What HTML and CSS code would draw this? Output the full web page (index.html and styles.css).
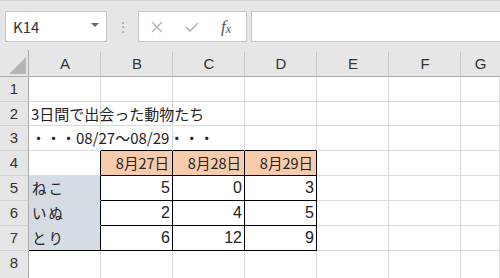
FILE: index.html
```html
<!DOCTYPE html>
<html lang="ja">
<head>
  <meta charset="UTF-8">
  <meta name="viewport" content="width=device-width, initial-scale=1.0">
  <title>Book1 - Excel</title>
  <link rel="stylesheet" href="styles.css">
</head>
<body>
  <div class="toolbar">
    <div class="namebox">
      <span>K14</span>
      <span class="arrow"></span>
    </div>
    <div class="grip">&#8942;</div>
    <div class="buttons">
      <svg class="btn" width="14" height="14" viewBox="0 0 14 14"><path d="M2 2 L12 12 M12 2 L2 12" stroke="#b4b4b4" stroke-width="1.4" fill="none"/></svg>
      <svg class="btn" width="16" height="14" viewBox="0 0 16 14"><path d="M2 7 L6 11 L14 3" stroke="#b4b4b4" stroke-width="1.6" fill="none"/></svg>
      <span class="fx">f<sub>x</sub></span>
    </div>
    <div class="formula"></div>
  </div>

  <div class="sheet">
    <!-- column headers -->
    <div class="corner"><span class="tri"></span></div>
    <div class="colhead">A</div>
    <div class="colhead">B</div>
    <div class="colhead">C</div>
    <div class="colhead">D</div>
    <div class="colhead">E</div>
    <div class="colhead">F</div>
    <div class="colhead last">G</div>

    <!-- row 1 -->
    <div class="rowhead">1</div>
    <div class="cell"></div><div class="cell"></div><div class="cell"></div><div class="cell"></div><div class="cell"></div><div class="cell"></div><div class="cell"></div>

    <!-- row 2 -->
    <div class="rowhead">2</div>
    <div class="cell text">3日間で出会った動物たち</div><div class="cell"></div><div class="cell"></div><div class="cell"></div><div class="cell"></div><div class="cell"></div><div class="cell"></div>

    <!-- row 3 -->
    <div class="rowhead">3</div>
    <div class="cell text">・・・08/27～08/29・・・</div><div class="cell bb"></div><div class="cell bb"></div><div class="cell bb"></div><div class="cell"></div><div class="cell"></div><div class="cell"></div>

    <!-- row 4 -->
    <div class="rowhead">4</div>
    <div class="cell br"></div>
    <div class="cell date bb br">8月27日</div>
    <div class="cell date bb br">8月28日</div>
    <div class="cell date bb br">8月29日</div>
    <div class="cell"></div><div class="cell"></div><div class="cell"></div>

    <!-- row 5 -->
    <div class="rowhead">5</div>
    <div class="cell label br">ねこ</div>
    <div class="cell num bb br">5</div>
    <div class="cell num bb br">0</div>
    <div class="cell num bb br">3</div>
    <div class="cell"></div><div class="cell"></div><div class="cell"></div>

    <!-- row 6 -->
    <div class="rowhead">6</div>
    <div class="cell label br">いぬ</div>
    <div class="cell num bb br">2</div>
    <div class="cell num bb br">4</div>
    <div class="cell num bb br">5</div>
    <div class="cell"></div><div class="cell"></div><div class="cell"></div>

    <!-- row 7 -->
    <div class="rowhead">7</div>
    <div class="cell label bb br">とり</div>
    <div class="cell num bb br">6</div>
    <div class="cell num bb br">12</div>
    <div class="cell num bb br">9</div>
    <div class="cell"></div><div class="cell"></div><div class="cell"></div>

    <!-- row 8 -->
    <div class="rowhead">8</div>
    <div class="cell"></div><div class="cell"></div><div class="cell"></div><div class="cell"></div><div class="cell"></div><div class="cell"></div><div class="cell"></div>
  </div>
</body>
</html>
```

FILE: styles.css
```css
body {
  margin: 0;
  padding: 0;
  width: 500px;
  height: 278px;
  overflow: hidden;
  background-color: #fff;
  font-family: "Noto Sans CJK JP", "Noto Sans", sans-serif;
  color: #222;
}

.toolbar {
  height: 50px;
  box-sizing: border-box;
  background-color: #e6e6e6;
  border-top: 1px solid #d2d2d2;
  display: flex;
  align-items: flex-start;
  padding-top: 10px;
}

.namebox {
  margin-left: 5px;
  width: 102px;
  height: 31px;
  box-sizing: border-box;
  background-color: #fff;
  border: 1px solid #c6c6c6;
  display: flex;
  align-items: center;
  justify-content: space-between;
  padding: 0 7px 0 7px;
  font-size: 15px;
  color: #333;
}

.namebox .arrow {
  width: 0;
  height: 0;
  border-left: 4px solid transparent;
  border-right: 4px solid transparent;
  border-top: 4px solid #666;
  margin-top: -4px;
}

.grip {
  width: 31px;
  height: 31px;
  line-height: 31px;
  text-align: center;
  color: #a6a6a6;
  font-size: 14px;
}

.buttons {
  width: 109px;
  height: 31px;
  box-sizing: border-box;
  background-color: #fff;
  border: 1px solid #c6c6c6;
  display: flex;
  align-items: center;
  padding-left: 11px;
  gap: 20px;
}

.fx {
  font-family: "Liberation Serif", serif;
  font-style: italic;
  font-size: 17px;
  color: #555;
  margin-left: 1px;
}

.fx sub {
  font-size: 12px;
  vertical-align: -1px;
}

.formula {
  flex: 1;
  margin-left: 4px;
  height: 31px;
  box-sizing: border-box;
  background-color: #fff;
  border: 1px solid #c6c6c6;
  border-right: none;
}

.sheet {
  display: grid;
  grid-template-columns: 29px repeat(6, 72px) 1fr;
  grid-template-rows: 27px 25px 24px repeat(5, 25px) 28px;
}

.corner,
.colhead,
.rowhead {
  background-color: #e6e6e6;
  box-sizing: border-box;
  color: #333;
  font-family: "Liberation Sans", "Noto Sans CJK JP", sans-serif;
}

.corner {
  border-right: 1px solid #ababab;
  border-bottom: 1px solid #ababab;
  position: relative;
}

.corner .tri {
  position: absolute;
  right: 2px;
  bottom: 2px;
  width: 0;
  height: 0;
  border-left: 17px solid transparent;
  border-bottom: 17px solid #b5b5b5;
}

.colhead {
  border-bottom: 1px solid #ababab;
  font-size: 15px;
  text-align: center;
  line-height: 28px;
  position: relative;
}

.colhead::after {
  content: "";
  position: absolute;
  right: 0;
  top: 2px;
  bottom: 0;
  width: 1px;
  background-color: #c8c8c8;
}

.colhead.last::after {
  display: none;
}

.rowhead {
  border-right: 1px solid #ababab;
  border-bottom: 1px solid #d2d2d2;
  font-size: 15px;
  text-align: center;
  line-height: 24px;
}

.cell {
  box-sizing: border-box;
  border-right: 1px solid #dadada;
  border-bottom: 1px solid #dadada;
  font-size: 14.5px;
  line-height: 24px;
  white-space: nowrap;
  padding: 0 3px;
}

.cell.text {
  overflow: visible;
  padding-left: 2px;
  font-size: 15px;
  position: relative;
  z-index: 1;
}

.cell.bb {
  border-bottom-color: #000;
}

.cell.br {
  border-right-color: #000;
}

.cell.date {
  background-color: #f8cbad;
  text-align: right;
  font-family: "Noto Sans CJK JP", sans-serif;
}

.cell.label {
  background-color: #d6dce4;
  padding-left: 3px;
  letter-spacing: 2px;
}

.cell.num {
  text-align: right;
  font-family: "Liberation Sans", sans-serif;
  font-size: 16px;
  padding-right: 2px;
}
```
